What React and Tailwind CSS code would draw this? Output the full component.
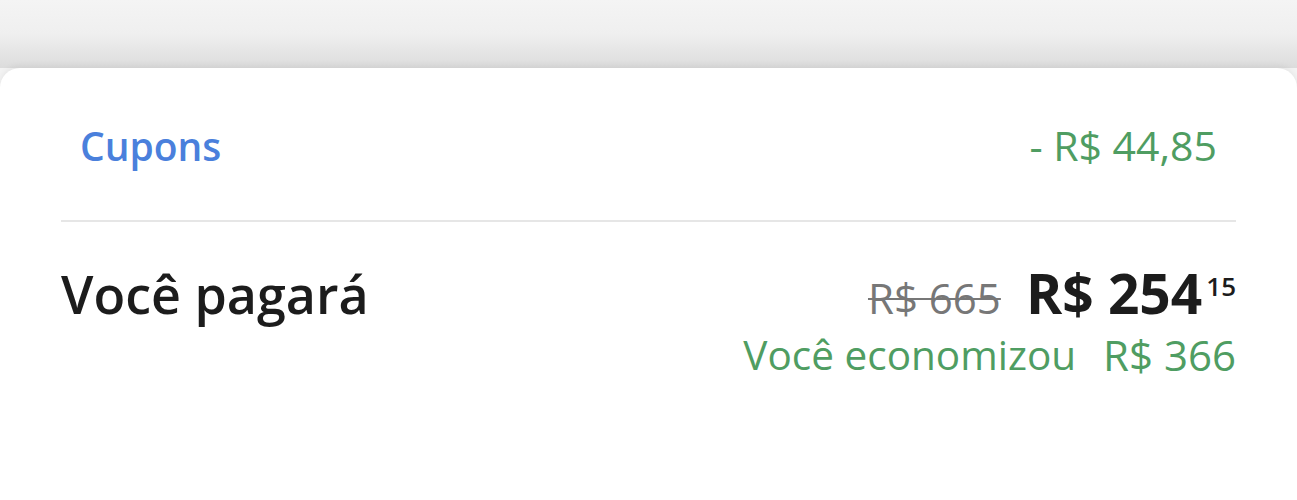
const font = { fontFamily: '"Open Sans", "Lato", sans-serif' };

export default function App() {
  return (
    <div className="h-[500px] w-full overflow-hidden bg-[#f3f3f3]" style={font}>
      {/* faded header area above the sheet */}
      <div className="h-[68px] bg-gradient-to-b from-[#f4f4f4] via-[#efefef] to-[#dcdcdc]" />

      <div className="h-[432px] rounded-t-[20px] bg-white shadow-[0_-2px_6px_rgba(0,0,0,0.06)]">
        <div className="flex h-[152px] items-center justify-between px-[80px] pt-[2px]">
          <span className="text-[39px] font-semibold leading-none text-[#4a80dc]">Cupons</span>
          <span className="text-[41px] leading-none text-[#4f9d62]">- R$ 44,85</span>
        </div>

        <div className="mx-[61px] h-[2px] bg-[#e6e6e6]" />

        <div className="flex items-baseline justify-between px-[61px] pt-[38px]">
          <span className="text-[52px] font-semibold leading-[66px] text-[#1c1c1c]">Você pagará</span>

          <div className="flex flex-col items-end">
            <div className="flex items-baseline">
              <span className="mr-[25px] text-[42px] leading-none text-[#777777] line-through decoration-[2px]">R$ 665</span>
              <span className="text-[55px] font-bold leading-[66px] text-[#1c1c1c]">R$ 254</span>
              <span className="ml-[4px] mt-[13px] self-start text-[26px] font-semibold leading-none text-[#1c1c1c]">15</span>
            </div>
            <div className="flex gap-[27px] text-[40.5px] leading-[58px] text-[#4f9d62]">
              <span>Você economizou</span>
              <span className="text-[42px]">R$ 366</span>
            </div>
          </div>
        </div>
      </div>
    </div>
  );
}
